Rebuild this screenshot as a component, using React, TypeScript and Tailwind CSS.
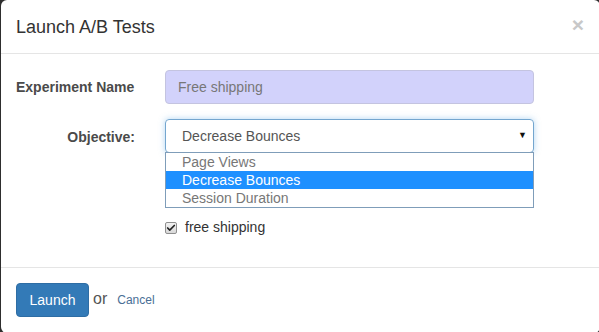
import { Check } from "lucide-react";

const options = ["Page Views", "Decrease Bounces", "Session Duration"];

export default function App() {
  return (
    <div className="h-[332px] w-[599px] overflow-hidden bg-[#2e2e2e] font-['Liberation_Sans',Arial,sans-serif]">
      <div className="ml-[1px] flex h-[333px] w-[599px] flex-col rounded-[6px] bg-white">
        <div className="flex h-[54px] items-center justify-between border-b border-[#e5e5e5] pl-[15px] pr-[16px]">
          <h4 className="text-[18px] leading-none text-[#333]">Launch A/B Tests</h4>
          <span className="mt-[-4px] text-[21px] font-bold leading-none text-[#c8c8c8]">×</span>
        </div>

        <div className="flex h-[214px] flex-col border-b border-[#e5e5e5] pt-[16px]">
          <div className="flex items-center">
            <label className="w-[164px] pl-[15px] text-[14px] font-bold text-[#4a4a4a]">
              Experiment Name
            </label>
            <div className="flex h-[34px] w-[369px] items-center rounded-[4px] border border-[#c4c4e0] bg-[#d2d2fb] px-3 text-[14px] text-[#777]">
              Free shipping
            </div>
          </div>

          <div className="mt-[15px] flex items-start">
            <label className="mt-[8px] w-[164px] pr-[30px] text-right text-[14px] font-bold text-[#4a4a4a]">
              Objective:
            </label>
            <div className="w-[369px]">
              <div className="flex h-[34px] items-center justify-between rounded-[4px] border border-[#74a6cf] pl-4 pr-[6px] text-[14px] text-[#555] shadow-[0_0_6px_rgba(102,175,233,0.5)]">
                <span>Decrease Bounces</span>
                <span className="text-[9px] text-[#111]">▼</span>
              </div>
              <div className="-mt-[1px] border border-[#7f9db9] bg-white">
                {options.map((o) => (
                  <div
                    key={o}
                    className={`h-[18px] pl-4 text-[14px] leading-[18px] ${
                      o === "Decrease Bounces" ? "bg-[#1e90ff] text-white" : "text-[#777]"
                    }`}
                  >
                    {o}
                  </div>
                ))}
              </div>
              <div className="mt-[9px] flex items-center gap-2 text-[14px] text-[#333]">
                <span className="flex h-[12px] w-[12px] items-center justify-center rounded-[2px] border border-[#8f8f8f] bg-gradient-to-b from-[#f2f2f2] to-[#d8d8d8]">
                  <Check className="h-[10px] w-[10px] text-[#222]" strokeWidth={4} />
                </span>
                <span>free shipping</span>
              </div>
            </div>
          </div>
        </div>

        <div className="flex items-center gap-[4px] pl-[15px] pt-[15px]">
          <button className="h-[34px] w-[73px] rounded-[4px] border border-[#2e6da4] bg-[#337ab7] text-[14px] text-white">
            Launch
          </button>
          <span className="mb-[2px] text-[16px] text-[#555]">or</span>
          <span className="ml-[6px] text-[12px] text-[#4a6f96]">Cancel</span>
        </div>
      </div>
    </div>
  );
}
